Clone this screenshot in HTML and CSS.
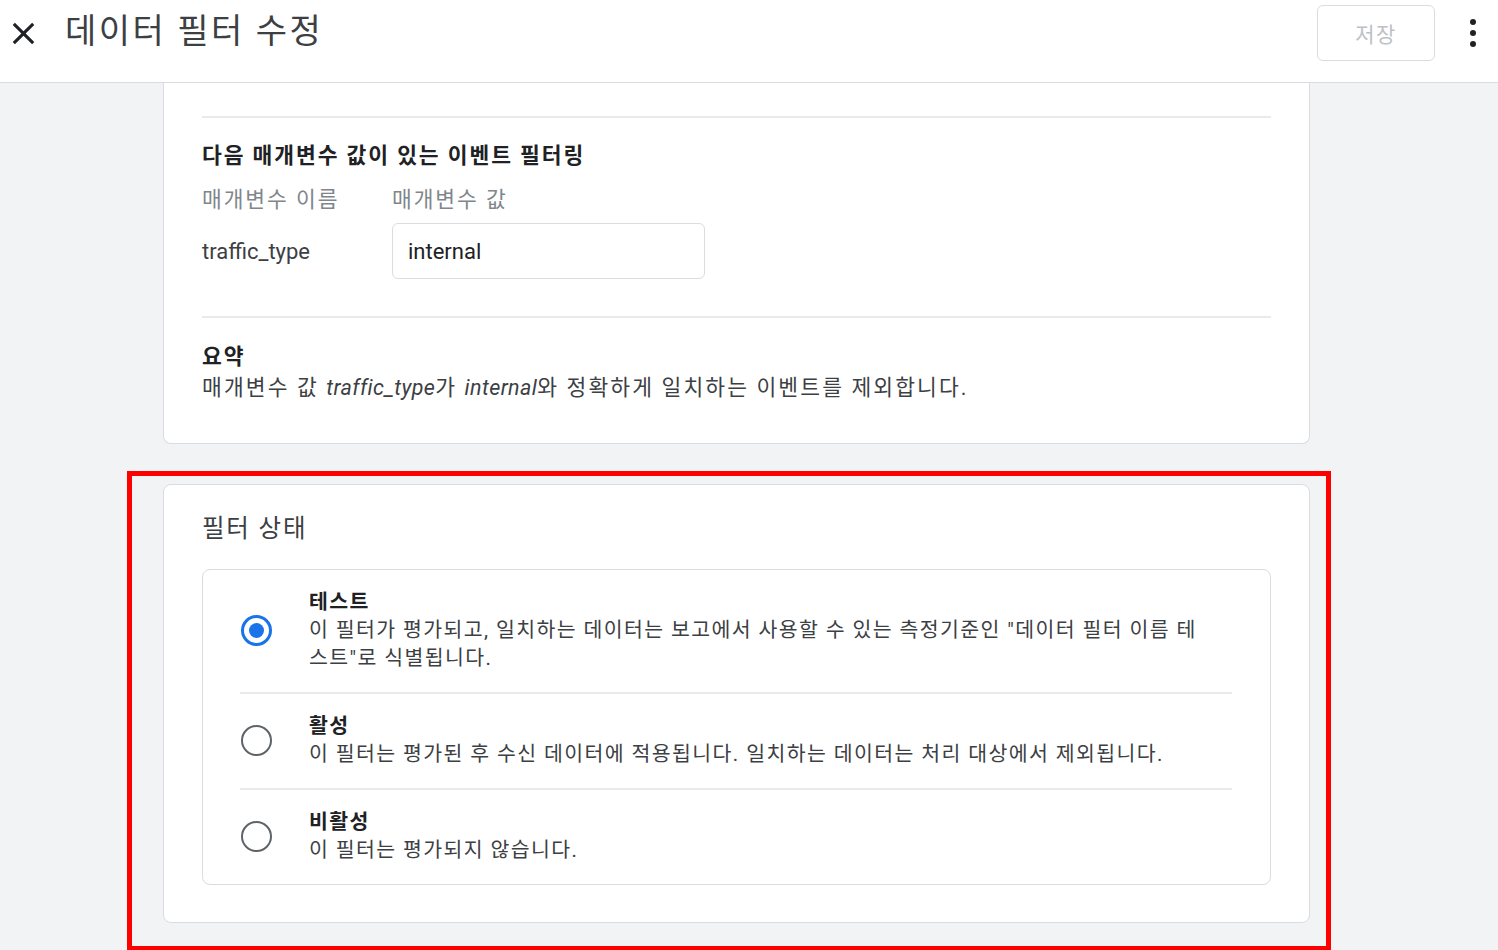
FILE: index.html
```html
<!DOCTYPE html>
<html lang="ko">
<head>
    <meta charset="UTF-8">
    <title>데이터 필터 수정</title>
    <link rel="stylesheet" href="styles.css">
</head>
<body>
    <header class="topbar">
        <div class="topbar-row">
            <button class="icon-btn close-btn" aria-label="닫기">
                <svg width="37" height="37" viewBox="0 0 24 24"><path fill="#202124" d="M19 6.41L17.59 5 12 10.59 6.41 5 5 6.41 10.59 12 5 17.59 6.41 19 12 13.41 17.59 19 19 17.59 13.41 12z"/></svg>
            </button>
            <h1 class="title">데이터 필터 수정</h1>
            <button class="save-btn" disabled>저장</button>
            <button class="icon-btn more-btn" aria-label="더보기">
                <svg width="12" height="34" viewBox="0 0 12 34"><circle cx="6" cy="6" r="3" fill="#202124"/><circle cx="6" cy="17" r="3" fill="#202124"/><circle cx="6" cy="28" r="3" fill="#202124"/></svg>
            </button>
        </div>
    </header>

    <main class="content">
        <section class="card card-top">
            <div class="card-section params">
                <h3 class="section-heading">다음 매개변수 값이 있는 이벤트 필터링</h3>
                <div class="param-grid">
                    <span class="param-label">매개변수 이름</span>
                    <span class="param-label">매개변수 값</span>
                    <span class="param-name">traffic_type</span>
                    <input class="param-input" type="text" value="internal">
                </div>
            </div>
            <div class="card-section summary">
                <h3 class="section-heading">요약</h3>
                <p class="summary-text">매개변수 값 <em>traffic_type</em>가 <em>internal</em>와 정확하게 일치하는 이벤트를 제외합니다.</p>
            </div>
        </section>

        <section class="card card-status">
            <h2 class="status-title">필터 상태</h2>
            <div class="options">
                <label class="option">
                    <span class="radio checked"></span>
                    <span class="option-text">
                        <strong>테스트</strong>
                        <span>이 필터가 평가되고, 일치하는 데이터는 보고에서 사용할 수 있는 측정기준인 "데이터 필터 이름 테스트"로 식별됩니다.</span>
                    </span>
                </label>
                <label class="option">
                    <span class="radio"></span>
                    <span class="option-text">
                        <strong>활성</strong>
                        <span>이 필터는 평가된 후 수신 데이터에 적용됩니다. 일치하는 데이터는 처리 대상에서 제외됩니다.</span>
                    </span>
                </label>
                <label class="option">
                    <span class="radio"></span>
                    <span class="option-text">
                        <strong>비활성</strong>
                        <span>이 필터는 평가되지 않습니다.</span>
                    </span>
                </label>
            </div>

            <!-- annotation frame drawn over the status card -->
            <div class="highlight"></div>
        </section>
    </main>
</body>
</html>
```

FILE: styles.css
```css
body {
    margin: 0;
    font-family: Roboto, "Noto Sans CJK KR", sans-serif;
    background-color: #f1f3f4;
    color: #3c4043;
    height: 950px;
    overflow: hidden;
}

.topbar {
    height: 82px;
    background-color: white;
    border-bottom: 1px solid #dadce0;
}

.topbar-row {
    height: 64px;
    display: flex;
    align-items: center;
    padding-left: 5px;
    padding-right: 19px;
}

.icon-btn {
    background: none;
    border: none;
    padding: 0;
    display: flex;
    cursor: pointer;
}

.close-btn {
    margin-top: 2px;
}

.title {
    margin: -2px 0 0 23px;
    font-size: 34px;
    font-weight: 400;
    line-height: 40px;
    letter-spacing: 2.5px;
    color: #3c4043;
}

.save-btn {
    margin-left: auto;
    width: 118px;
    height: 56px;
    margin-top: 1px;
    background: white;
    border: 1px solid #dadce0;
    border-radius: 6px;
    font-family: inherit;
    font-size: 21px;
    letter-spacing: 1.5px;
    color: #bdc1c6;
}

.more-btn {
    margin-left: 32px;
    margin-top: 2px;
}

.content {
    padding-left: 163px;
}

.card {
    width: 1147px;
    box-sizing: border-box;
    background-color: white;
    border: 1px solid #dadce0;
    border-radius: 8px;
}

.card-top {
    border-top: none;
    border-radius: 0 0 8px 8px;
    padding: 33px 38px 0;
    height: 361px;
}

.card-section {
    border-top: 2px solid #e8eaed;
}

.section-heading {
    margin: 0;
    font-size: 21.5px;
    font-weight: 700;
    line-height: 30px;
    letter-spacing: 1.9px;
    color: #202124;
}

.params {
    padding: 23px 0 37px;
}

.param-grid {
    display: grid;
    grid-template-columns: 190px 313px;
    row-gap: 8px;
    align-items: center;
    margin-top: 14px;
}

.param-label {
    font-size: 21.5px;
    line-height: 30px;
    letter-spacing: 1.9px;
    color: #80868b;
}

.param-name {
    font-size: 22px;
    color: #3c4043;
}

.param-input {
    height: 56px;
    box-sizing: border-box;
    border: 1px solid #dadce0;
    border-radius: 6px;
    padding: 0 15px;
    font-family: inherit;
    font-size: 22px;
    color: #202124;
}

.summary {
    padding-top: 24px;
}

.summary-text {
    margin: 0;
    font-size: 21.5px;
    line-height: 32px;
    letter-spacing: 2.1px;
    color: #3c4043;
}

.summary-text em {
    letter-spacing: 0.4px;
}

.card-status {
    position: relative;
    margin-top: 40px;
    padding: 27px 38px 37px;
}

.status-title {
    margin: 0;
    font-size: 24.5px;
    font-weight: 400;
    line-height: 34px;
    letter-spacing: 1.8px;
    color: #3c4043;
}

.options {
    margin-top: 23px;
    border: 1px solid #dadce0;
    border-radius: 8px;
}

.option {
    display: flex;
    align-items: center;
    margin: 0 38px 0 37px;
    padding: 18px 0 20px;
    cursor: pointer;
}

.option + .option {
    border-top: 2px solid #e8eaed;
}

.radio {
    flex: none;
    width: 31px;
    height: 31px;
    box-sizing: border-box;
    border: 2.5px solid #5f6368;
    border-radius: 50%;
    margin-left: 1px;
    display: flex;
    align-items: center;
    justify-content: center;
}

.radio.checked {
    border: 3px solid #1a73e8;
}

.radio.checked::after {
    content: "";
    width: 15px;
    height: 15px;
    border-radius: 50%;
    background-color: #1a73e8;
}

.option-text {
    display: flex;
    flex-direction: column;
    margin-left: 37px;
    padding-right: 28px;
    font-size: 20.5px;
    line-height: 28px;
    letter-spacing: 1.4px;
    color: #3c4043;
}

.option-text strong {
    color: #202124;
}

.highlight {
    position: absolute;
    left: -37px;
    top: -14px;
    width: 1204px;
    height: 480px;
    box-sizing: border-box;
    border: 5px solid #ff0000;
    pointer-events: none;
}
```
